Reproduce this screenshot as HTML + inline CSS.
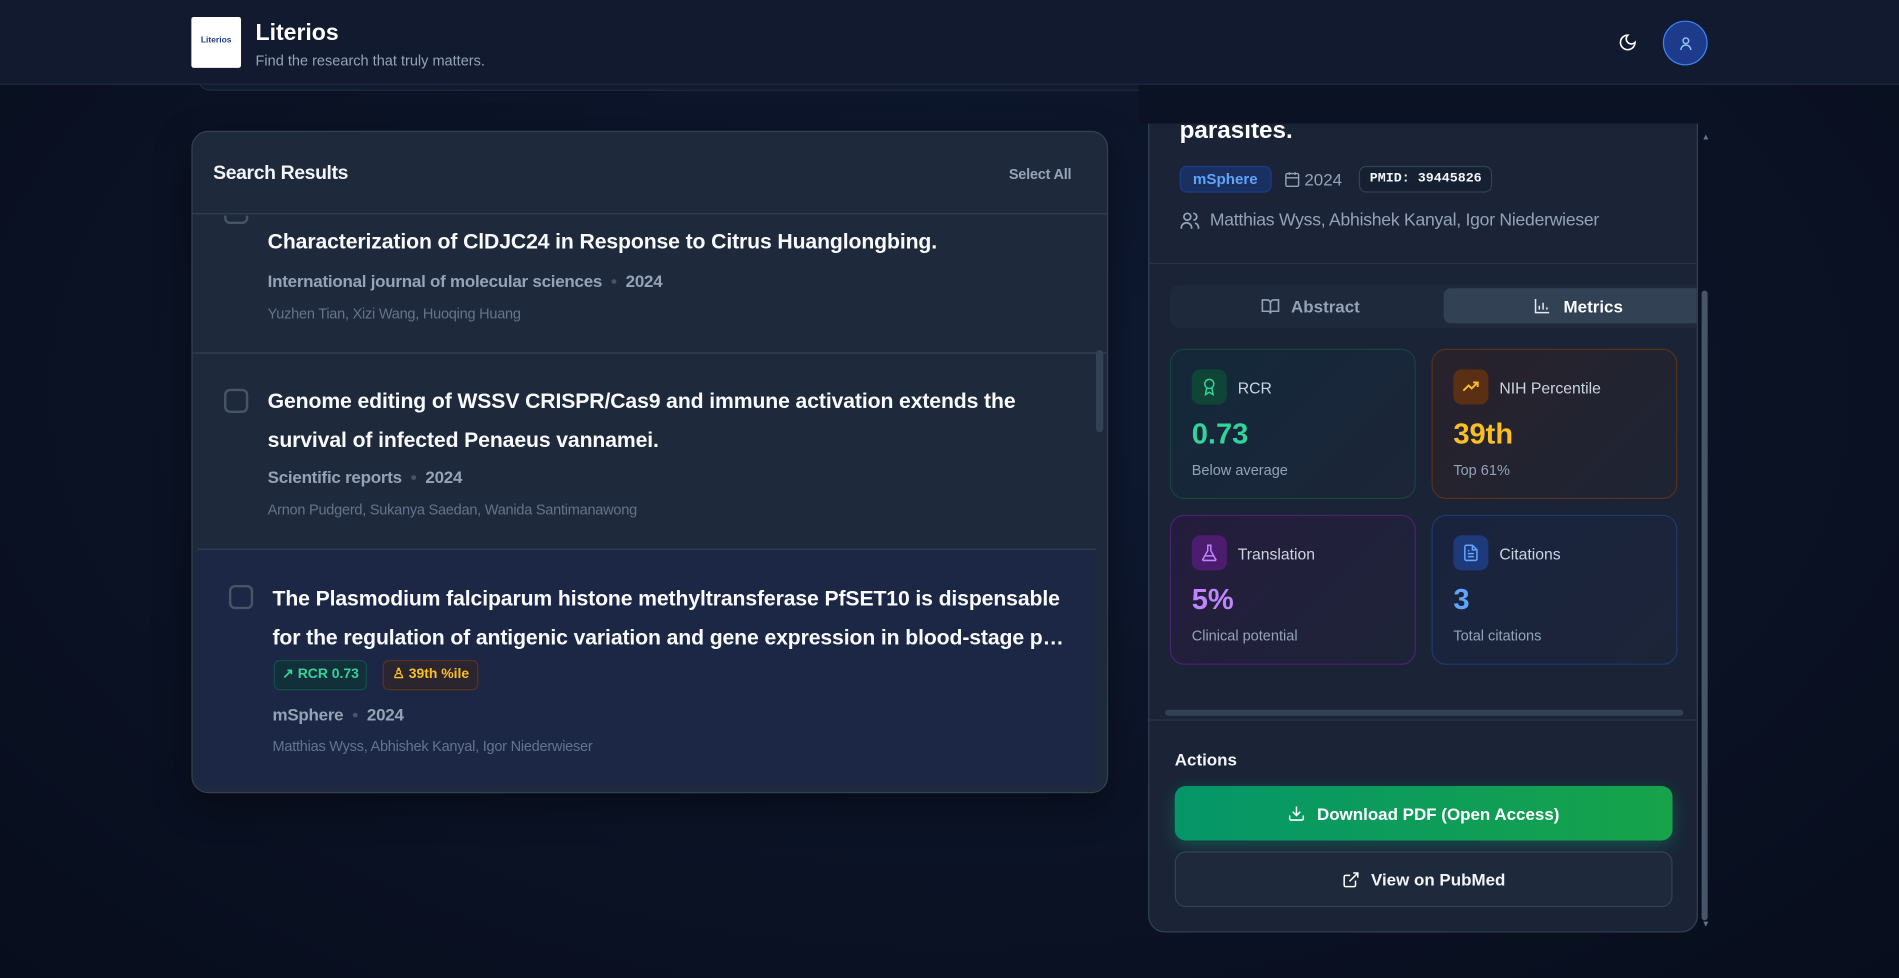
<!DOCTYPE html>
<html><head><meta charset="utf-8">
<style>
*{box-sizing:border-box;margin:0;padding:0}
html,body{width:1899px;height:978px;overflow:hidden;background:#0a1122}
#root{width:1568px;height:808px;transform:scale(1.2111);transform-origin:0 0;position:relative;font-family:"Liberation Sans",sans-serif;color:#e2e8f0;
background:radial-gradient(ellipse at 50% 40%,#0f1a33 0%,#0a1122 70%,#070d1c 100%)}
.abs{position:absolute}
.hdr{left:0;top:0;width:1568px;height:70px;background:#111a2e;border-bottom:1px solid #1f2a40}
.logo{left:158px;top:14px;width:41px;height:42px;background:#fff;border-radius:2px;color:#1e3a8a;font-size:7px;font-weight:bold;text-align:center;padding-top:16px}
.title{left:211px;top:17px;font-size:19px;font-weight:bold;color:#fff}
.sub{left:211px;top:43px;font-size:12px;color:#94a3b8}
.panel{background:#1e293b;border:1px solid #334155;border-radius:14px}
.chk{width:20px;height:20px;border:2px solid #475569;border-radius:5px}
.t{font-size:17.5px;font-weight:bold;color:#f8fafc;line-height:32px;white-space:nowrap;letter-spacing:-0.1px}
.j{font-size:14px;font-weight:bold;color:#94a3b8;letter-spacing:-0.2px}
.a{font-size:12px;color:#64748b;letter-spacing:-0.2px}
.card{width:203px;height:124px;border-radius:12px;border:1px solid}
.ic{position:absolute;left:17px;top:16px;width:29px;height:29px;border-radius:7px;display:flex;align-items:center;justify-content:center}
.lbl{position:absolute;left:55px;top:24px;font-size:13px;color:#cbd5e1}
.val{position:absolute;left:17px;top:56px;font-size:24px;font-weight:bold}
.sm{position:absolute;left:17px;top:92px;font-size:12px;color:#94a3b8}
</style></head><body><div id="root">
<div class="abs" style="left:162px;top:40px;width:1246px;height:35px;border:1px solid #1f2a40;border-radius:0 0 12px 12px;background:#111a2e"></div>

<!-- right panel -->
<div class="abs panel" style="left:948px;top:60px;width:454px;height:710px;overflow:hidden;background:#1a2436">
 <div class="abs" style="left:25px;top:36px;font-size:20px;font-weight:bold;color:#fff">parasites.</div>
 <div class="abs" style="left:25px;top:76px;height:22px;padding:0 10px;border-radius:6px;background:#1a3060;border:1px solid #1e3a8a;color:#60a5fa;font-size:12.5px;font-weight:bold;line-height:20px">mSphere</div>
 <svg class="abs" style="left:111px;top:80px" width="14" height="14" viewBox="0 0 24 24" fill="none" stroke="#94a3b8" stroke-width="2"><rect x="3" y="4" width="18" height="18" rx="2"/><path d="M3 10h18M8 2v4M16 2v4"/></svg>
 <div class="abs" style="left:128px;top:79px;font-size:14px;color:#94a3b8">2024</div>
 <div class="abs" style="left:173px;top:76px;height:22px;padding:0 8px;border-radius:6px;border:1px solid #334155;background:#162033;color:#f1f5f9;font-family:'Liberation Mono',monospace;font-size:11px;font-weight:bold;line-height:20px">PMID: 39445826</div>
 <svg class="abs" style="left:25px;top:113px" width="17" height="17" viewBox="0 0 24 24" fill="none" stroke="#94a3b8" stroke-width="2"><circle cx="9" cy="7" r="4"/><path d="M2 21v-1a6 6 0 0 1 12 0v1M16 3a4 4 0 0 1 0 8M22 21v-1a6 6 0 0 0-4-5.6"/></svg>
 <div class="abs" style="left:50px;top:113px;font-size:14.5px;color:#94a3b8;letter-spacing:-0.2px">Matthias Wyss, Abhishek Kanyal, Igor Niederwieser</div>
 <div class="abs" style="left:0;top:156px;width:454px;border-top:1px solid #2a3548"></div>
 <div class="abs" style="left:17px;top:174px;width:440px;height:36px;border-radius:8px;background:#1e293b"></div>
 <svg class="abs" style="left:92px;top:184px" width="16" height="16" viewBox="0 0 24 24" fill="none" stroke="#94a3b8" stroke-width="2"><path d="M2 4h6a4 4 0 0 1 4 4v13a3 3 0 0 0-3-3H2zM22 4h-6a4 4 0 0 0-4 4v13a3 3 0 0 1 3-3h7z"/></svg>
 <div class="abs" style="left:117px;top:184px;font-size:14px;font-weight:bold;color:#94a3b8">Abstract</div>
 <div class="abs" style="left:243px;top:177px;width:214px;height:29px;border-radius:6px;background:#334155"></div>
 <svg class="abs" style="left:317px;top:184px" width="15" height="15" viewBox="0 0 24 24" fill="none" stroke="#e2e8f0" stroke-width="2"><path d="M3 3v18h18M8 17v-5M13 17V8M18 17v-3"/></svg>
 <div class="abs" style="left:342px;top:184px;font-size:14px;font-weight:bold;color:#f8fafc">Metrics</div>

 <div class="abs card" style="left:17px;top:227px;border-color:#14463f;background:linear-gradient(135deg,#13283a,#1c2638)">
  <div class="ic" style="background:#0f4436"><svg width="15" height="15" viewBox="0 0 24 24" fill="none" stroke="#34d399" stroke-width="2"><circle cx="12" cy="8" r="6"/><path d="M8.5 13.5 7 22l5-3 5 3-1.5-8.5"/></svg></div>
  <div class="lbl">RCR</div><div class="val" style="color:#34d399">0.73</div><div class="sm">Below average</div></div>
 <div class="abs card" style="left:233px;top:227px;border-color:#5a3018;background:linear-gradient(135deg,#28222b,#1e2434)">
  <div class="ic" style="background:#5a2f14"><svg width="15" height="15" viewBox="0 0 24 24" fill="none" stroke="#fbbf24" stroke-width="2.5"><path d="M2 17l7-7 4 4 8-8M15 6h6v6"/></svg></div>
  <div class="lbl">NIH Percentile</div><div class="val" style="color:#fbbf24">39th</div><div class="sm">Top 61%</div></div>
 <div class="abs card" style="left:17px;top:364px;border-color:#4a2370;background:linear-gradient(135deg,#241c3c,#1e2438)">
  <div class="ic" style="background:#4c1d6e"><svg width="15" height="15" viewBox="0 0 24 24" fill="none" stroke="#c084fc" stroke-width="2"><path d="M9 2h6M10 2v7L4 20a1 1 0 0 0 1 2h14a1 1 0 0 0 1-2L14 9V2M6 16h12"/></svg></div>
  <div class="lbl">Translation</div><div class="val" style="color:#c084fc">5%</div><div class="sm">Clinical potential</div></div>
 <div class="abs card" style="left:233px;top:364px;border-color:#1e3a70;background:linear-gradient(135deg,#19233e,#1c2538)">
  <div class="ic" style="background:#1e3a7a"><svg width="15" height="15" viewBox="0 0 24 24" fill="none" stroke="#60a5fa" stroke-width="2"><path d="M14 2H6a2 2 0 0 0-2 2v16a2 2 0 0 0 2 2h12a2 2 0 0 0 2-2V8zM14 2v6h6M8 13h8M8 17h8M8 9h2"/></svg></div>
  <div class="lbl">Citations</div><div class="val" style="color:#60a5fa">3</div><div class="sm">Total citations</div></div>
 <div class="abs" style="left:13px;top:525px;width:428px;height:5px;border-radius:3px;background:#334155"></div>
 <div class="abs" style="left:0;top:533px;width:454px;border-top:1px solid #2a3548"></div>
 <div class="abs" style="left:21px;top:558px;font-size:14px;font-weight:bold;color:#f1f5f9">Actions</div>
 <div class="abs" style="left:21px;top:588px;width:411px;height:45px;border-radius:9px;background:linear-gradient(90deg,#059669,#16a34a);box-shadow:0 4px 14px rgba(16,185,129,.3);display:flex;align-items:center;justify-content:center;gap:9px;font-size:14px;font-weight:bold;color:#fff">
  <svg width="15" height="15" viewBox="0 0 24 24" fill="none" stroke="#fff" stroke-width="2"><path d="M21 15v4a2 2 0 0 1-2 2H5a2 2 0 0 1-2-2v-4M7 10l5 5 5-5M12 15V3"/></svg>Download PDF (Open Access)</div>
 <div class="abs" style="left:21px;top:642px;width:411px;height:46px;border-radius:9px;background:#1e293b;border:1px solid #334155;display:flex;align-items:center;justify-content:center;gap:9px;font-size:14px;font-weight:bold;color:#f1f5f9">
  <svg width="15" height="15" viewBox="0 0 24 24" fill="none" stroke="#fff" stroke-width="2"><path d="M18 13v6a2 2 0 0 1-2 2H5a2 2 0 0 1-2-2V8a2 2 0 0 1 2-2h6M15 3h6v6M10 14 21 3"/></svg>View on PubMed</div>
</div>
<div class="abs" style="left:940px;top:60px;width:470px;height:42px;background:#0b1224"></div>
<div class="abs" style="left:1405px;top:240px;width:5px;height:520px;border-radius:3px;background:#475569"></div>
<div class="abs" style="left:1405px;top:110px;font-size:7px;color:#64748b">▲</div>
<div class="abs" style="left:1405px;top:760px;font-size:7px;color:#64748b">▼</div>

<div class="abs hdr"></div>
<div class="abs logo">Literios</div>
<div class="abs title">Literios</div>
<div class="abs sub">Find the research that truly matters.</div>
<svg class="abs" style="left:1336px;top:27px" width="16" height="16" viewBox="0 0 24 24" fill="none" stroke="#fff" stroke-width="2" stroke-linecap="round"><path d="M12 3a6 6 0 0 0 9 9 9 9 0 1 1-9-9z"/></svg>
<div class="abs" style="left:1373px;top:17px;width:37px;height:37px;border-radius:50%;background:#1e3a8a;border:1px solid #3b82f6;display:flex;align-items:center;justify-content:center"><svg width="14" height="14" viewBox="0 0 24 24" fill="none" stroke="#93c5fd" stroke-width="2"><circle cx="12" cy="8" r="4"/><path d="M5 21a7 7 0 0 1 14 0"/></svg></div>

<!-- left panel -->
<div class="abs panel" style="left:158px;top:108px;width:757px;height:547px;overflow:hidden;box-shadow:0 10px 30px rgba(0,0,0,.4)">
 <div class="abs" style="left:0;top:0;width:757px;height:68px;border-bottom:1px solid #334155"></div>
 <div class="abs" style="left:17px;top:26px;font-size:16px;font-weight:bold;color:#f1f5f9;letter-spacing:-0.3px">Search Results</div>
 <div class="abs" style="left:674px;top:28px;font-size:12px;font-weight:bold;color:#94a3b8;letter-spacing:-0.2px">Select All</div>
 <div class="abs" style="left:0;top:69px;width:757px;height:480px;overflow:hidden">
  <div class="abs chk" style="left:26px;top:-13px"></div>
  <div class="abs t" style="left:62px;top:5px">Characterization of ClDJC24 in Response to Citrus Huanglongbing.</div>
  <div class="abs j" style="left:62px;top:46px">International journal of molecular sciences &nbsp;<span style="color:#475569">•</span>&nbsp; 2024</div>
  <div class="abs a" style="left:62px;top:74px">Yuzhen Tian, Xizi Wang, Huoqing Huang</div>
  <div class="abs" style="left:0;top:113px;width:757px;border-top:1px solid #334155"></div>
  <div class="abs chk" style="left:26px;top:143px"></div>
  <div class="abs t" style="left:62px;top:137px">Genome editing of WSSV CRISPR/Cas9 and immune activation extends the<br>survival of infected Penaeus vannamei.</div>
  <div class="abs j" style="left:62px;top:208px">Scientific reports &nbsp;<span style="color:#475569">•</span>&nbsp; 2024</div>
  <div class="abs a" style="left:62px;top:236px">Arnon Pudgerd, Sukanya Saedan, Wanida Santimanawong</div>
  <div class="abs" style="left:4px;top:275px;width:742px;height:196px;background:#1b2744;border-top:1px solid #334155"></div>
  <div class="abs chk" style="left:30px;top:305px"></div>
  <div class="abs t" style="left:66px;top:300px;width:660px;overflow:hidden;text-overflow:ellipsis">The Plasmodium falciparum histone methyltransferase PfSET10 is dispensable</div>
  <div class="abs t" style="left:66px;top:332px;width:660px;overflow:hidden;text-overflow:ellipsis">for the regulation of antigenic variation and gene expression in blood-stage parasites.</div>
  <div class="abs" style="left:67px;top:367px;height:25px;padding:0 6px;border-radius:5px;background:#11303a;border:1px solid #134e4a;color:#34d399;font-size:11.5px;font-weight:bold;line-height:23px">↗ RCR 0.73</div>
  <div class="abs" style="left:157px;top:367px;height:25px;padding:0 7px;border-radius:5px;background:#2b2530;border:1px solid #5a3320;color:#fbbf24;font-size:11.5px;font-weight:bold;line-height:23px">♙ 39th %ile</div>
  <div class="abs j" style="left:66px;top:404px">mSphere &nbsp;<span style="color:#475569">•</span>&nbsp; 2024</div>
  <div class="abs a" style="left:66px;top:431px">Matthias Wyss, Abhishek Kanyal, Igor Niederwieser</div>
  <div class="abs" style="left:746px;top:111px;width:6px;height:68px;border-radius:3px;background:#334155"></div>
 </div>
</div>
</div></body></html>
